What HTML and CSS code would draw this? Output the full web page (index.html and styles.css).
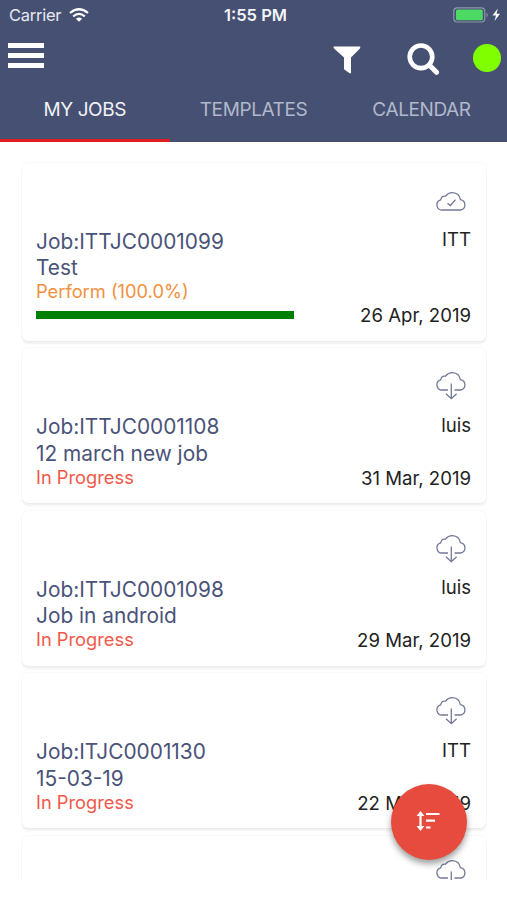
FILE: index.html
```html
<!DOCTYPE html>
<html lang="en">
<head>
<meta charset="utf-8">
<title>My Jobs</title>
<link rel="stylesheet" href="styles.css">
</head>
<body>
<svg class="defs" width="0" height="0" aria-hidden="true">
  <symbol id="cloud-down" viewBox="0 0 32 30">
    <path d="M13 19H7.200A5.200 5.200 0 0 1 5.700 8.800Q6.500 4.500 10.500 5.200Q13.500 1.500 17.500 1.700Q24.200 2.200 25.400 8.600A5.300 5.300 0 0 1 25.800 19H19.500M16.300 12.500V27.500M11 22.700L16.300 27.700L21.600 22.700"/>
  </symbol>
  <symbol id="cloud-check" viewBox="0 0 32 30">
    <path d="M7 24A5.200 5.200 0 0 1 5.700 13.800Q6.500 9.500 10.500 10.200Q13.500 6.500 17.500 6.700Q24.200 7.200 25.400 13.600A5.300 5.300 0 0 1 25.800 24ZM12.500 17.200L15.300 19.500L20.500 13.600"/>
  </symbol>
</svg>
<div class="screen">
  <header class="header">
    <div class="status-bar">
      <div class="carrier"><span class="carrier-name">Carrier</span>
        <svg width="20" height="14" viewBox="0 0 20 14" fill="none" stroke="#fff" stroke-width="2.200"><path d="M1 5Q10-2.500 19 5M4.200 8.300Q10 3.500 15.800 8.300"/><path d="M6.900 10.700Q10 8.200 13.100 10.700L10 13.800Z" fill="#fff" stroke="none"/></svg>
      </div>
      <span class="clock">1:55 PM</span>
      <svg class="battery" width="49" height="16" viewBox="0 0 49 16"><rect x=".8" y=".8" width="31" height="14.200" rx="3.500" fill="none" stroke="#8f97ab" stroke-width="1.200"/><rect x="3" y="2.500" width="26.800" height="10.800" rx="1.500" fill="#4cd964"/><path d="M33.500 5.500Q36 8 33.500 10.500Z" fill="#8f97ab"/><path d="M44.800 1.500L39.500 8.500H43L41.500 14L47 6.800H43.500Z" fill="#fff"/></svg>
    </div>
    <div class="toolbar">
      <div class="menu"><i></i><i></i><i></i></div>
      <div class="actions">
        <svg class="filter" width="28" height="28" viewBox="0 0 28 28"><path d="M.6.500H27.200Q27.600 1.700 26.700 2.800L18 11.500V27.200H16.500L11 23.200V11.500L1.300 2.800Q.2 1.700.6.500Z" fill="#fff"/></svg>
        <svg class="search" width="33" height="33" viewBox="0 0 33 33" fill="none" stroke="#fff"><circle cx="14" cy="13.800" r="11.300" stroke-width="4.600"/><path d="M22.500 22.300L29.500 29.300" stroke-width="5" stroke-linecap="round"/></svg>
        <span class="online"></span>
      </div>
    </div>
    <nav class="tabs">
      <span class="tab active">MY JOBS</span>
      <span class="tab">TEMPLATES</span>
      <span class="tab">CALENDAR</span>
    </nav>
  </header>
  <main class="list">
    <article class="card">
      <div class="info"><p class="title">Job:ITTJC0001099</p><p class="title">Test</p><p class="status perform">Perform (100.0%)</p><div class="progress"></div></div>
      <div class="meta"><svg class="cloud"><use href="#cloud-check"/></svg><p class="owner">ITT</p><p class="date">26 Apr, 2019</p></div>
    </article>
    <article class="card">
      <div class="info"><p class="title">Job:ITTJC0001108</p><p class="title">12 march new job</p><p class="status">In Progress</p></div>
      <div class="meta"><svg class="cloud"><use href="#cloud-down"/></svg><p class="owner">luis</p><p class="date">31 Mar, 2019</p></div>
    </article>
    <article class="card">
      <div class="info"><p class="title">Job:ITTJC0001098</p><p class="title">Job in android</p><p class="status">In Progress</p></div>
      <div class="meta"><svg class="cloud"><use href="#cloud-down"/></svg><p class="owner">luis</p><p class="date">29 Mar, 2019</p></div>
    </article>
    <article class="card">
      <div class="info"><p class="title">Job:ITJC0001130</p><p class="title">15-03-19</p><p class="status">In Progress</p></div>
      <div class="meta"><svg class="cloud"><use href="#cloud-down"/></svg><p class="owner">ITT</p><p class="date">22 Mar, 2019</p></div>
    </article>
    <article class="card">
      <div class="info"></div>
      <div class="meta"><svg class="cloud"><use href="#cloud-down"/></svg></div>
    </article>
  </main>
  <button class="fab" aria-label="Sort">
    <svg width="24" height="20" viewBox="0 0 24 20" fill="none" stroke="#fff" stroke-width="2.200"><path d="M4.500 3V17M10 3H23.500M10 9.700H19M10 16.500H14.500"/><path d="M4.500 0L8.400 5H.6ZM4.500 20L.6 15H8.400Z" fill="#fff" stroke="none"/></svg>
  </button>
</div>
</body>
</html>
```
FILE: styles.css
```css
* { box-sizing: border-box; }
body { margin: 0; background: #fff; font-family: Inter, "Liberation Sans", sans-serif; }
p { margin: 0; }
.defs { display: block; height: 0; }
.screen { position: relative; width: 507px; height: 900px; overflow: hidden; }

.header { height: 142.400px; background: #465072; color: #fff; }
.status-bar { height: 30px; display: grid; grid-template-columns: 1fr auto 1fr; align-items: center; padding: 0 5px 0 9px; }
.carrier { display: flex; align-items: center; gap: 8px; font-size: 16.500px; color: #e6e9f2; }
.carrier-name { letter-spacing: -0.250px; }
.clock { font-size: 16.500px; font-weight: 600; color: #f4f5fa; }
.battery { justify-self: end; }
.toolbar { height: 48px; display: flex; justify-content: space-between; padding: 0 6.500px 0 7.500px; }
.menu { display: grid; align-content: start; gap: 5.500px; padding-top: 13px; }
.menu i { display: block; width: 36px; height: 4.500px; background: #fff; }
.actions { display: flex; align-items: flex-start; }
.filter { margin: 15.500px 46px 0 0; }
.search { margin: 13px 33px 0 0; }
.online { width: 28px; height: 28px; margin-top: 13.500px; border-radius: 50%; background: #80ff00; }
.tabs { height: 64.400px; display: grid; grid-template-columns: 169.500px 168px 168px; }
.tab { display: flex; justify-content: center; padding-top: 20px; font-size: 19px; line-height: 24px; letter-spacing: -0.400px; color: #b1b8cb; }
.active { color: #f0f2f8; border-bottom: 3px solid #e01e20; }

.list { height: 737.600px; padding: 20.600px 21px 0 22px; overflow: hidden; }
.card { display: flex; justify-content: space-between; height: 155px; margin-bottom: 7.500px; padding: 0 15px 13.600px 14px; background: #fff; border-radius: 6px; box-shadow: 0 0 0 1px rgba(0,0,0,.025), 0 3px 2px rgba(0,0,0,.055); }
.card:first-child { height: 178px; }
.info { padding-top: 65.700px; }
.title { height: 26.400px; font-size: 20.850px; line-height: 26.400px; color: #4a5379; white-space: nowrap; }
.status { height: 22.800px; font-size: 18.300px; line-height: 21.800px; color: #f0594a; white-space: nowrap; }
.perform { color: #f29040; }
.progress { width: 258px; height: 8px; margin-top: 6.300px; background: #008000; }
.meta { display: flex; flex-direction: column; align-items: flex-end; color: #222; font-size: 18.600px; line-height: 23px; }
.cloud { width: 32px; height: 30px; margin: 23px 4.500px 0 0; fill: none; stroke: #737997; stroke-width: 1.300; flex: none; }
.owner { margin-top: 12.500px; }
.date { margin-top: auto; white-space: nowrap; }

.fab { position: absolute; left: 391px; top: 784px; width: 76px; height: 76px; display: grid; place-items: center; border: 0; border-radius: 50%; background: #e74b3d; box-shadow: 0 4px 6px rgba(0,0,0,.38); padding: 0 3px 2px 0; }
```
